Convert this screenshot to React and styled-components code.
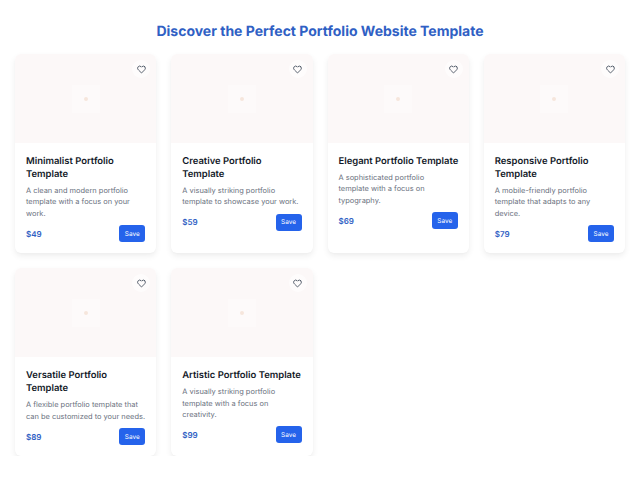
import React from 'react';
import styled, { createGlobalStyle } from 'styled-components';

const GlobalStyle = createGlobalStyle`
  body {
    margin: 0;
    background: #fff;
    font-family: Inter, "Liberation Sans", sans-serif;
    text-rendering: geometricPrecision;
  }
`;

const Page = styled.div`
  padding: 23px 15px 0;
`;

const Heading = styled.h1`
  margin: 0 0 13px;
  font-size: 14px;
  line-height: 18px;
  font-weight: 700;
  text-align: center;
  color: #2f60c4;
`;

const Grid = styled.div`
  display: grid;
  grid-template-columns: repeat(4, 1fr);
  gap: 15px;
`;

const Card = styled.div`
  background: #fff;
  border-radius: 6px;
  overflow: hidden;
  box-shadow: 0 3px 6px rgba(0, 0, 0, 0.07), 0 1px 2px rgba(0, 0, 0, 0.015);
`;

const Thumb = styled.div`
  position: relative;
  height: 89px;
  background: #fcf8f8;
  display: flex;
  align-items: center;
  justify-content: center;
`;

const Placeholder = styled.div`
  width: 28px;
  height: 28px;
  background: #fdfafa;
  display: flex;
  align-items: center;
  justify-content: center;

  &::after {
    content: '';
    width: 4px;
    height: 4px;
    border-radius: 50%;
    background: #f6e6dc;
  }
`;

const LikeButton = styled.span`
  position: absolute;
  top: 6px;
  right: 6px;
  width: 18px;
  height: 18px;
  border-radius: 50%;
  background: rgba(255, 255, 255, 0.6);
  display: flex;
  align-items: center;
  justify-content: center;
  color: #4b5563;
`;

const Body = styled.div`
  padding: 12px 11px 11px;
`;

const Title = styled.h2`
  margin: 0 0 4px;
  font-size: 9.45px;
  line-height: 13px;
  font-weight: 600;
  color: #111827;
  white-space: pre;
`;

const Description = styled.p`
  margin: 0 0 6px;
  font-size: 7.45px;
  line-height: 11.4px;
  color: #6b7280;
  white-space: pre;
`;

const Footer = styled.div`
  display: flex;
  align-items: center;
  justify-content: space-between;
`;

const Price = styled.span`
  font-size: 8px;
  font-weight: 600;
  color: #2f60c4;
`;

const SaveButton = styled.button`
  width: 26px;
  height: 17px;
  padding: 0;
  border: 0;
  border-radius: 3px;
  background: #2563eb;
  color: #fff;
  font-family: inherit;
  font-size: 6.4px;
  font-weight: 400;
  text-rendering: geometricPrecision;
`;

// line breaks are kept in the data so every card wraps like the design
const templates = [
  { title: 'Minimalist Portfolio\nTemplate', text: 'A clean and modern portfolio\ntemplate with a focus on your\nwork.', price: 49 },
  { title: 'Creative Portfolio\nTemplate', text: 'A visually striking portfolio\ntemplate to showcase your work.', price: 59 },
  { title: 'Elegant Portfolio Template', text: 'A sophisticated portfolio\ntemplate with a focus on\ntypography.', price: 69 },
  { title: 'Responsive Portfolio\nTemplate', text: 'A mobile-friendly portfolio\ntemplate that adapts to any\ndevice.', price: 79 },
  { title: 'Versatile Portfolio\nTemplate', text: 'A flexible portfolio template that\ncan be customized to your needs.', price: 89 },
  { title: 'Artistic Portfolio Template', text: 'A visually striking portfolio\ntemplate with a focus on\ncreativity.', price: 99 },
];

function Heart() {
  return (
    <svg width="9" height="9" viewBox="0 0 24 24" fill="none" stroke="currentColor" strokeWidth="2.4" strokeLinecap="round" strokeLinejoin="round">
      <path d="M20.8 4.6a5.5 5.5 0 0 0-7.8 0L12 5.7l-1-1.1a5.5 5.5 0 0 0-7.8 7.8l1 1.1L12 21.3l7.8-7.8 1-1.1a5.5 5.5 0 0 0 0-7.8z" />
    </svg>
  );
}

export default function App() {
  return (
    <>
      <GlobalStyle />
      <Page>
        <Heading>Discover the Perfect Portfolio Website Template</Heading>
        <Grid>
          {templates.map((item) => (
            <Card key={item.title}>
              <Thumb>
                <Placeholder />
                <LikeButton>
                  <Heart />
                </LikeButton>
              </Thumb>
              <Body>
                <Title>{item.title}</Title>
                <Description>{item.text}</Description>
                <Footer>
                  <Price>${item.price}</Price>
                  <SaveButton>Save</SaveButton>
                </Footer>
              </Body>
            </Card>
          ))}
        </Grid>
      </Page>
    </>
  );
}
